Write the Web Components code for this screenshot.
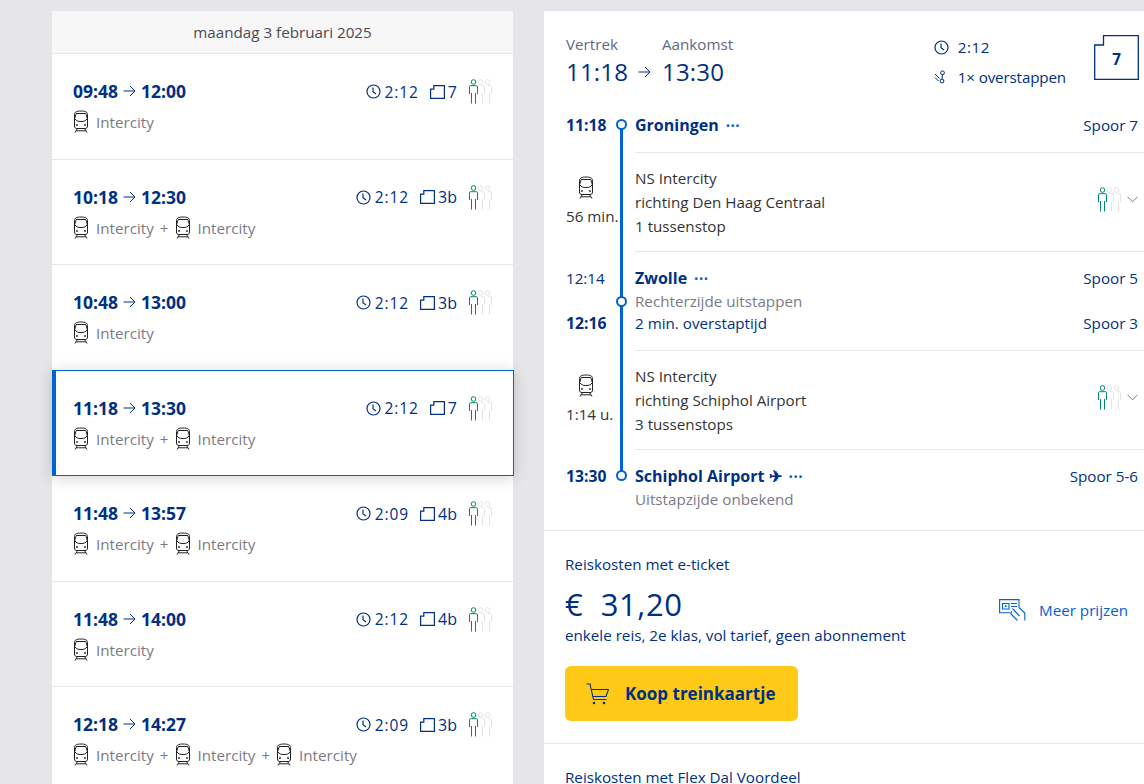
<!DOCTYPE html>
<html lang="nl">
<head>
<meta charset="utf-8">
<title>Reisadvies</title>
<style>
html, body { margin:0; padding:0; height:100%; overflow:hidden; background:#e6e6e9; }
body { font-family:"Open Sans","Noto Sans",sans-serif; font-size:15.2px; color:#003082; }
</style>
</head>
<body>
<ns-planner></ns-planner>
<script>
/* icons */
const NAVY = '#003082';
const BLUE = '#0063d3';

const ICONS = {
  train: (c) => `<svg width="16" height="24" viewBox="0 0 16 24" fill="none" stroke="${c}" stroke-width="1" style="display:block"><path d="M1.500 4.500C1.500 2 3.800 1 8 1s6.500 1 6.500 3.500V16c0 1.800-1 2.500-2.500 2.500H4c-1.500 0-2.500-.7-2.500-2.500z"/><path d="M3.200 3.500h9.600l1.500 5c-1.500 2.500-3.300 3-6.300 3s-4.800-.5-6.300-3z"/><circle cx="4" cy="15" r=".9" fill="${c}" stroke="none"/><circle cx="12" cy="15" r=".9" fill="${c}" stroke="none"/><path d="M4.500 18.500 2 22.500M11.500 18.500 14 22.500M3.200 20.800h9.600"/></svg>`,
  clock: (c) => `<svg width="15" height="15" viewBox="0 0 15 15" fill="none" stroke="${c}" stroke-width="1.200" style="display:block"><circle cx="7.500" cy="7.500" r="6.500"/><path d="M7 3.500v4.300l3 2.200"/></svg>`,
  track: (c) => `<svg width="15" height="14" viewBox="0 0 15 14" fill="none" stroke="${c}" stroke-width="1.200" style="display:block"><path d="M.6 13.400V4.200h3.200V.6h10.600v12.800z"/></svg>`,
  arrow: (c) => `<svg width="13" height="12" viewBox="0 0 13 12" fill="none" stroke="${c}" stroke-width="1" style="display:block"><path d="M.5 6h11.500M7 1l5 5-5 5"/></svg>`,
  transfer: (c) => `<svg width="15" height="14" viewBox="0 0 15 14" fill="none" stroke="${c}" stroke-width="1" style="display:block"><circle cx="8.500" cy="2.800" r="1.900"/><circle cx="8" cy="11" r="1.900"/><path d="M8.300 4.700 8.100 9M1 4l4.500 4.500M1 7.500l3.500 3.500"/></svg>`,
  cart: (c) => `<svg width="23" height="22" viewBox="0 0 23 22" fill="none" stroke="${c}" stroke-width="1.100" style="display:block"><path d="M.5 1H4L7.500 16.500H20.500"/><path d="M5.200 6.500H22.500L20 13.500H6.800"/><circle cx="8" cy="20" r="1.300" fill="${c}" stroke="none"/><circle cx="18" cy="20" r="1.300" fill="${c}" stroke="none"/></svg>`,
  prices: (c) => `<svg width="27" height="22" viewBox="0 0 27 22" fill="none" stroke="${c}" stroke-width="1.100" style="display:block"><path d="M20 8.500V.6H.6v13.200h11"/><path d="M3.500 4.500h6.500v5.500H3.500zM12 4.500h6M12 7.500h6"/><circle cx="6.700" cy="7.200" r="1" fill="${c}" stroke="none"/><path d="M13.500 9.500 20.500 17M12.500 12 12 15l6.500 6.500M20 8.500l5.800 5.500v7.500"/></svg>`,
};

function persons() {
  const half = (x) => `<g transform="translate(${x} 0)" stroke="#e4e4e7"><circle cx="4.500" cy="3" r="2.300"/><path d="M5 6.700h2.500c.7 0 1 .3 1 1V15M6.500 14V24.500"/></g>`;
  const full = `<g stroke="#00866a"><circle cx="4.500" cy="3" r="2.300"/><path d="M.5 15V7.700c0-.7.300-1 1-1h6c.7 0 1 .3 1 1V15M2.500 14V24.500M6.500 14V24.500"/></g>`;
  return `<svg width="23" height="25" viewBox="0 0 23 25" fill="none" stroke-width="1" style="display:block">${half(14)}${half(7)}${full}</svg>`;
}

/* one line in the list of journeys */
const ROW = document.createElement('template');
ROW.innerHTML = `
<style>
:host { display:block; box-sizing:border-box; height:105.5px; padding:25px 21px 0 21px; background:#fff; border-bottom:1px solid #e6e6e9; }
:host([selected]) { position:relative; z-index:1; margin:-1px -1px 0 0; height:106.5px; padding-left:17px; border:1px solid #0063d3; border-left-width:4px; box-shadow:0 2px 14px rgba(0,0,0,.18); }
.top { display:flex; align-items:center; height:24px; }
.times { font-weight:700; font-size:17.500px; display:flex; align-items:center; gap:5px; }
.meta { margin-left:auto; display:flex; align-items:center; padding-top:1px; }
.meta .clock { margin-right:4px; }
.meta .dur { margin-right:11px; font-size:15.500px; letter-spacing:.9px; }
.meta .trk { margin-right:3px; }
#trk { font-size:16px; }
.people { margin-left:12px; margin-top:1px; }
.services { display:flex; align-items:center; height:24px; margin-top:7px; color:#7b7b86; }
.s { display:flex; align-items:center; gap:7px; }
.plus { margin:0 6px; }
</style>
<div class="top">
  <div class="times"><span id="dep"></span><span id="arr-icon"></span><span id="arr"></span></div>
  <div class="meta"><span class="clock" id="clock"></span><span class="dur" id="dur"></span><span class="trk" id="trk-icon"></span><span id="trk"></span></div>
  <div class="people" id="people"></div>
</div>
<div class="services" id="services"></div>`;

class TripRow extends HTMLElement {
  constructor() {
    super();
    const shadow = this.attachShadow({mode:'open'});
    shadow.appendChild(ROW.content.cloneNode(true));
  }
  connectedCallback() {
    const s = this.shadowRoot;
    s.querySelector('#dep').textContent = this.getAttribute('dep');
    s.querySelector('#arr').textContent = this.getAttribute('arr');
    s.querySelector('#dur').textContent = this.getAttribute('dur');
    s.querySelector('#trk').textContent = this.getAttribute('track');
    s.querySelector('#arr-icon').innerHTML = ICONS.arrow(NAVY);
    s.querySelector('#clock').innerHTML = ICONS.clock(NAVY);
    s.querySelector('#trk-icon').innerHTML = ICONS.track(NAVY);
    s.querySelector('#people').innerHTML = persons();
    const n = parseInt(this.getAttribute('legs'));
    let html = '';
    for (let i = 0; i < n; i++) {
      if (i) html += '<span class="plus">+</span>';
      html += `<span class="s">${ICONS.train('#222')}Intercity</span>`;
    }
    s.querySelector('#services').innerHTML = html;
  }
}
customElements.define('ns-trip-row', TripRow);

/* left column */
const LIST = document.createElement('template');
LIST.innerHTML = `
<style>
:host { display:block; width:461px; flex:none; background:#fff; }
header { height:43px; box-sizing:border-box; border-bottom:1px solid #e6e6e9; background:#f7f7f7; color:#4a4a55; display:flex; align-items:center; justify-content:center; }
</style>
<header><slot name="date"></slot></header>
<slot></slot>`;
class TripList extends HTMLElement {
  constructor() {
    super();
    this.attachShadow({mode:'open'}).appendChild(LIST.content.cloneNode(true));
  }
}
customElements.define('ns-trip-list', TripList);

/* timeline row: time, rail, content */
const STOP = document.createElement('template');
STOP.innerHTML = `
<style>
:host { display:grid; grid-template-columns:46px 18px 1fr; padding-left:22px; }
.time { padding-top:var(--pad-top,0); }
.rail { position:relative; margin-left:-1px; }
.rail::before { content:""; position:absolute; left:9px; width:3px; top:var(--rail-top,0); bottom:var(--rail-bottom,0); background:#0063d3; }
.dot { position:absolute; left:5px; top:var(--dot-top,0); width:7px; height:7px; border:2px solid #0063d3; border-radius:50%; background:#fff; }
.body { margin-left:5px; border-bottom:1px solid var(--line,#e6e6e9); padding:var(--pad-top,0) 6px var(--pad-bottom,0) 0; }
</style>
<div class="time"><slot name="time"></slot></div>
<div class="rail"><slot name="dot"></slot></div>
<div class="body"><slot></slot></div>`;
class TimelineRow extends HTMLElement {
  constructor() {
    super();
    this.attachShadow({mode:'open'}).appendChild(STOP.content.cloneNode(true));
  }
  connectedCallback() {
    if (this.hasAttribute('dot')) {
      const d = document.createElement('div');
      d.className = 'dot';
      this.shadowRoot.querySelector('.rail').appendChild(d);
    }
  }
}
customElements.define('ns-timeline-row', TimelineRow);

/* right column */
const DETAIL = document.createElement('template');
DETAIL.innerHTML = `
<style>
:host { display:block; flex:1; background:#fff; overflow:hidden; line-height:24px; }
.head { display:flex; height:102px; box-sizing:border-box; padding:21px 5px 0 22px; }
.when { display:grid; grid-template-columns:72px 24px auto; grid-template-rows:24px 32px; align-items:center; }
.lab { color:#5f6a80; }
.big { font-size:24px; line-height:32px; letter-spacing:.2px; }
.info { margin-left:auto; margin-right:28px; }
.info div { display:flex; align-items:center; gap:9px; height:30px; }
.info .tr { letter-spacing:-.15px; }
.info .du { letter-spacing:.5px; }
.box { width:45px; height:45px; margin-top:3px; position:relative; flex:none; }
.box svg { display:block; }
.box span { position:absolute; inset:0; display:flex; align-items:center; justify-content:center; font-weight:700; padding-top:3px; box-sizing:border-box; }
.a { --rail-top:11px; --dot-top:6px; --pad-top:0; --pad-bottom:15px; }
.row { display:flex; justify-content:space-between; }
b { font-weight:700; font-size:16px; }
.t { font-weight:700; font-size:15.700px; }
.dots { color:#0063d3; font-weight:700; margin-left:7px; letter-spacing:.5px; }
.grey { color:#7b7b86; }
.leg-l { color:#333; display:flex; flex-direction:column; align-items:flex-start; gap:4px; margin-top:10px; }
.leg-l svg { margin-left:12px; }
.leg { color:#333; display:flex; justify-content:space-between; align-items:center; }
.leg .p { display:flex; align-items:center; gap:6px; margin-top:-5px; }
.price { border-top:1px solid #e6e6e9; padding:21px 22px 22px 21px; }
.amount { font-size:31px; line-height:44px; margin-top:6px; letter-spacing:.6px; white-space:pre; }
.pr { display:flex; align-items:flex-end; justify-content:space-between; }
.more { display:flex; align-items:center; gap:13px; color:#0063d3; margin-right:-6px; margin-bottom:24px; }
.small { line-height:22px; margin-top:-2px; }
button { all:unset; box-sizing:border-box; display:flex; align-items:center; width:233px; height:55px; margin-top:20px; padding-left:21px; gap:16px; background:#ffc917; border-radius:6px; font-weight:700; font-size:17px; color:#003082; }
.flex { border-top:1px solid #e6e6e9; padding:26px 21px 0; line-height:14px; }
</style>
<div class="head">
  <div class="when">
    <div class="lab">Vertrek</div><div></div><div class="lab">Aankomst</div>
    <div class="big">11:18</div><div id="arrow"></div><div class="big">13:30</div>
  </div>
  <div class="info">
    <div><span id="c"></span><span class="du">2:12</span></div>
    <div class="tr"><span id="sw"></span>1× overstappen</div>
  </div>
  <div class="box"><svg width="45" height="45" viewBox="0 0 45 45" fill="none" stroke="#003082" stroke-width="1.300"><path d="M.7 44.300V10h8.800V.7h34.800v43.600z"/></svg><span>7</span></div>
</div>
<ns-timeline-row dot class="a">
  <span slot="time" class="t" style="display:block">11:18</span>
  <div class="row"><span><b>Groningen</b><span class="dots">···</span></span><span>Spoor 7</span></div>
</ns-timeline-row>
<ns-timeline-row style="--pad-top:13px;--pad-bottom:13px">
  <div slot="time" class="leg-l" id="l1"></div>
  <div class="leg"><span>NS Intercity<br>richting Den Haag Centraal<br>1 tussenstop</span><span class="p" id="p1"></span></div>
</ns-timeline-row>
<ns-timeline-row dot style="--pad-top:14px;--pad-bottom:16px;--dot-top:44px">
  <div slot="time" style="line-height:22px"><div style="height:24px;line-height:24px">12:14</div><div>&nbsp;</div><div class="t">12:16</div></div>
  <div style="line-height:22px">
    <div class="row" style="line-height:24px"><span><b>Zwolle</b><span class="dots">···</span></span><span>Spoor 5</span></div>
    <div class="grey">Rechterzijde uitstappen</div>
    <div class="row"><span>2 min. overstaptijd</span><span>Spoor 3</span></div>
  </div>
</ns-timeline-row>
<ns-timeline-row style="--pad-top:13px;--pad-bottom:13px">
  <div slot="time" class="leg-l" id="l2"></div>
  <div class="leg"><span>NS Intercity<br>richting Schiphol Airport<br>3 tussenstops</span><span class="p" id="p2"></span></div>
</ns-timeline-row>
<ns-timeline-row dot style="--pad-top:14px;--pad-bottom:18px;--dot-top:20px;--rail-bottom:56px;--line:transparent">
  <span slot="time" class="t" style="display:block">13:30</span>
  <div class="row"><span><b>Schiphol Airport ✈</b><span class="dots">···</span></span><span>Spoor 5-6</span></div>
  <div class="grey" style="line-height:23px">Uitstapzijde onbekend</div>
</ns-timeline-row>
<div class="price">
  <div>Reiskosten met e-ticket</div>
  <div class="pr">
    <div>
      <div class="amount">€  31,20</div>
      <div class="small">enkele reis, 2e klas, vol tarief, geen abonnement</div>
    </div>
    <div class="more"><span id="mp"></span>Meer prijzen</div>
  </div>
  <button><span id="cart"></span>Koop treinkaartje</button>
</div>
<div class="flex">Reiskosten met Flex Dal Voordeel</div>`;

class TripDetail extends HTMLElement {
  constructor() {
    super();
    const s = this.attachShadow({mode:'open'});
    s.appendChild(DETAIL.content.cloneNode(true));
    s.querySelector('#arrow').innerHTML = ICONS.arrow(NAVY);
    s.querySelector('#c').innerHTML = ICONS.clock(NAVY);
    s.querySelector('#sw').innerHTML = ICONS.transfer(NAVY);
    s.querySelector('#mp').innerHTML = ICONS.prices(BLUE);
    s.querySelector('#cart').innerHTML = ICONS.cart(NAVY);
    const chev = `<svg width="11" height="7" viewBox="0 0 11 7" fill="none" stroke="#7b7b86" stroke-width="1" style="display:block"><path d="M.5 .8l5 5 5-5"/></svg>`;
    s.querySelector('#p1').innerHTML = persons() + chev;
    s.querySelector('#p2').innerHTML = persons() + chev;
    s.querySelector('#l1').innerHTML = ICONS.train('#222') + '<span style="white-space:nowrap">56 min.</span>';
    s.querySelector('#l2').innerHTML = ICONS.train('#222') + '<span style="white-space:nowrap">1:14 u.</span>';
  }
}
customElements.define('ns-trip-detail', TripDetail);

/* page */
const APP = document.createElement('template');
APP.innerHTML = `
<style>
:host { display:flex; gap:31px; height:784px; box-sizing:border-box; padding:11px 0 0 52px; overflow:hidden; }
</style>
<ns-trip-list>
  <span slot="date">maandag 3 februari 2025</span>
  <ns-trip-row dep="09:48" arr="12:00" dur="2:12" track="7" legs="1"></ns-trip-row>
  <ns-trip-row dep="10:18" arr="12:30" dur="2:12" track="3b" legs="2"></ns-trip-row>
  <ns-trip-row dep="10:48" arr="13:00" dur="2:12" track="3b" legs="1"></ns-trip-row>
  <ns-trip-row selected dep="11:18" arr="13:30" dur="2:12" track="7" legs="2"></ns-trip-row>
  <ns-trip-row dep="11:48" arr="13:57" dur="2:09" track="4b" legs="2"></ns-trip-row>
  <ns-trip-row dep="11:48" arr="14:00" dur="2:12" track="4b" legs="1"></ns-trip-row>
  <ns-trip-row dep="12:18" arr="14:27" dur="2:09" track="3b" legs="3"></ns-trip-row>
</ns-trip-list>
<ns-trip-detail></ns-trip-detail>`;
class Planner extends HTMLElement {
  constructor() {
    super();
    this.attachShadow({mode:'open'}).appendChild(APP.content.cloneNode(true));
  }
}
customElements.define('ns-planner', Planner);
</script>
</body>
</html>
